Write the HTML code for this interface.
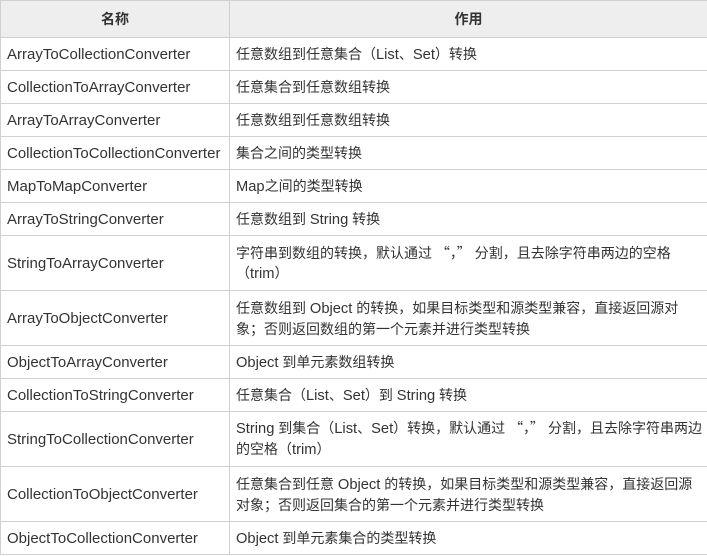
<!DOCTYPE html>
<html><head><meta charset="utf-8"><style>
html,body{margin:0;padding:0;background:#fff;}
table{border-collapse:collapse;table-layout:fixed;width:707px;position:absolute;left:0;top:0;font-family:"Liberation Sans","Noto Sans CJK SC",sans-serif;font-size:14px;color:#333;}
td,th{border:1px solid #d0d0d0;padding:0 6px;line-height:20px;vertical-align:middle;text-align:left;box-sizing:border-box;white-space:nowrap;overflow:hidden;}
th{background:#eeeeee;text-align:center;font-weight:bold;height:37px;}
tr.s td{height:33px;}
tr.d td{height:55px;}
td:first-child{font-size:15px;padding-top:1px;}
.l{font-size:14.7px;}
.q{font-family:"Noto Sans CJK SC",sans-serif;}
</style></head><body>
<table>
<colgroup><col style="width:229px"><col style="width:478px"></colgroup>
<tr><th>名称</th><th>作用</th></tr>
<tr class="s"><td>ArrayToCollectionConverter</td><td>任意数组到任意集合（<span class="l">List</span>、<span class="l">Set</span>）转换</td></tr>
<tr class="s"><td>CollectionToArrayConverter</td><td>任意集合到任意数组转换</td></tr>
<tr class="s"><td>ArrayToArrayConverter</td><td>任意数组到任意数组转换</td></tr>
<tr class="s"><td>CollectionToCollectionConverter</td><td>集合之间的类型转换</td></tr>
<tr class="s"><td>MapToMapConverter</td><td><span class="l">Map</span>之间的类型转换</td></tr>
<tr class="s"><td>ArrayToStringConverter</td><td>任意数组到 <span class="l">String</span> 转换</td></tr>
<tr class="d"><td>StringToArrayConverter</td><td>字符串到数组的转换，默认通过 <span class="q">“，”</span> 分割，且去除字符串两边的空格<br>（<span class="l">trim</span>）</td></tr>
<tr class="d"><td>ArrayToObjectConverter</td><td>任意数组到 <span class="l">Object</span> 的转换，如果目标类型和源类型兼容，直接返回源对<br>象；否则返回数组的第一个元素并进行类型转换</td></tr>
<tr class="s"><td>ObjectToArrayConverter</td><td><span class="l">Object</span> 到单元素数组转换</td></tr>
<tr class="s"><td>CollectionToStringConverter</td><td>任意集合（<span class="l">List</span>、<span class="l">Set</span>）到 <span class="l">String</span> 转换</td></tr>
<tr class="d"><td>StringToCollectionConverter</td><td><span class="l">String</span> 到集合（<span class="l">List</span>、<span class="l">Set</span>）转换，默认通过 <span class="q">“，”</span> 分割，且去除字符串两边<br>的空格（<span class="l">trim</span>）</td></tr>
<tr class="d"><td>CollectionToObjectConverter</td><td>任意集合到任意 <span class="l">Object</span> 的转换，如果目标类型和源类型兼容，直接返回源<br>对象；否则返回集合的第一个元素并进行类型转换</td></tr>
<tr class="s"><td>ObjectToCollectionConverter</td><td><span class="l">Object</span> 到单元素集合的类型转换</td></tr>
</table>
</body></html>
